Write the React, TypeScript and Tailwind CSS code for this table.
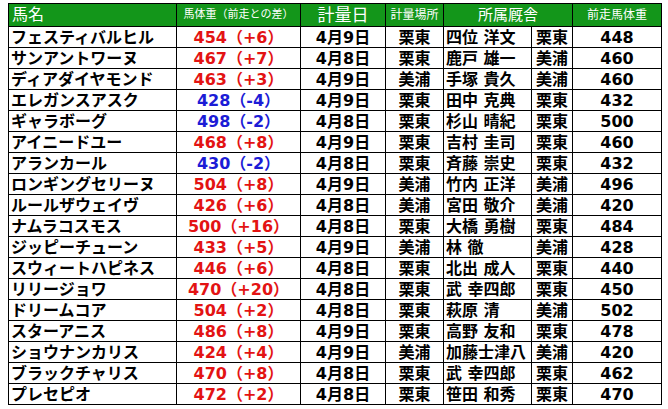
const rows: [string, string, boolean, string, string, string, string, string][] = [
  ['フェスティバルヒル', '454（+6）', true, '4月9日', '栗東', '四位 洋文', '栗東', '448'],
  ['サンアントワーヌ', '467（+7）', true, '4月8日', '栗東', '鹿戸 雄一', '美浦', '460'],
  ['ディアダイヤモンド', '463（+3）', true, '4月9日', '美浦', '手塚 貴久', '美浦', '460'],
  ['エレガンスアスク', '428（-4）', false, '4月9日', '栗東', '田中 克典', '栗東', '432'],
  ['ギャラボーグ', '498（-2）', false, '4月8日', '栗東', '杉山 晴紀', '栗東', '500'],
  ['アイニードユー', '468（+8）', true, '4月9日', '栗東', '吉村 圭司', '栗東', '460'],
  ['アランカール', '430（-2）', false, '4月8日', '栗東', '斉藤 崇史', '栗東', '432'],
  ['ロンギングセリーヌ', '504（+8）', true, '4月9日', '美浦', '竹内 正洋', '美浦', '496'],
  ['ルールザウェイヴ', '426（+6）', true, '4月8日', '美浦', '宮田 敬介', '美浦', '420'],
  ['ナムラコスモス', '500（+16）', true, '4月8日', '栗東', '大橋 勇樹', '栗東', '484'],
  ['ジッピーチューン', '433（+5）', true, '4月9日', '美浦', '林 徹', '美浦', '428'],
  ['スウィートハピネス', '446（+6）', true, '4月8日', '栗東', '北出 成人', '栗東', '440'],
  ['リリージョワ', '470（+20）', true, '4月8日', '栗東', '武 幸四郎', '栗東', '450'],
  ['ドリームコア', '504（+2）', true, '4月8日', '栗東', '萩原 清', '美浦', '502'],
  ['スターアニス', '486（+8）', true, '4月9日', '栗東', '高野 友和', '栗東', '478'],
  ['ショウナンカリス', '424（+4）', true, '4月9日', '美浦', '加藤士津八', '美浦', '420'],
  ['ブラックチャリス', '470（+8）', true, '4月8日', '栗東', '武 幸四郎', '栗東', '462'],
  ['プレセピオ', '472（+2）', true, '4月8日', '栗東', '笹田 和秀', '栗東', '470'],
];

const App = () => {
  return (
    <div
      className="w-[668px] h-[409px] bg-white pt-[3px] pl-[8px]"
      style={{ fontFamily: '"DejaVu Sans", "Noto Sans CJK JP", sans-serif' }}
    >
      <table className="table-fixed border-collapse w-[653px]">
        <colgroup>
          <col className="w-[168px]" />
          <col className="w-[124px]" />
          <col className="w-[85px]" />
          <col className="w-[58px]" />
          <col className="w-[88px]" />
          <col className="w-[41px]" />
          <col className="w-[89px]" />
        </colgroup>
        <thead>
          <tr className="h-[23px] bg-[#13961a] text-white">
            <th className="border border-black px-[3px] text-left font-normal text-[16px] leading-[20px]">馬名</th>
            <th className="border border-black p-0 text-center font-normal text-[11px] leading-[20px]">馬体重（前走との差）</th>
            <th className="border border-black p-0 text-center font-normal text-[17px] leading-[20px]">計量日</th>
            <th className="border border-black p-0 text-center font-normal text-[12px] leading-[20px]">計量場所</th>
            <th colSpan={2} className="border border-black p-0 text-center font-normal text-[15px] leading-[20px]">所属厩舎</th>
            <th className="border border-black p-0 text-center font-normal text-[12px] leading-[20px]">前走馬体重</th>
          </tr>
        </thead>
        <tbody className="text-black font-bold text-[16px] leading-[19px]">
          {rows.map((r) => (
            <tr key={r[0]} className="h-[21px]">
              <td className="border border-black pl-[2px] pr-0 py-0 text-left whitespace-nowrap">{r[0]}</td>
              <td className={`border border-black p-0 text-center whitespace-nowrap ${r[2] ? 'text-[#e31313]' : 'text-[#1c1cd6]'}`}>{r[1]}</td>
              <td className="border border-black p-0 text-center">{r[3]}</td>
              <td className="border border-black p-0 text-center">{r[4]}</td>
              <td className="border border-black pl-[2px] p-0 text-left whitespace-nowrap">{r[5]}</td>
              <td className="border border-black p-0 text-center">{r[6]}</td>
              <td className="border border-black p-0 text-center">{r[7]}</td>
            </tr>
          ))}
        </tbody>
      </table>
    </div>
  );
};

export default App;
